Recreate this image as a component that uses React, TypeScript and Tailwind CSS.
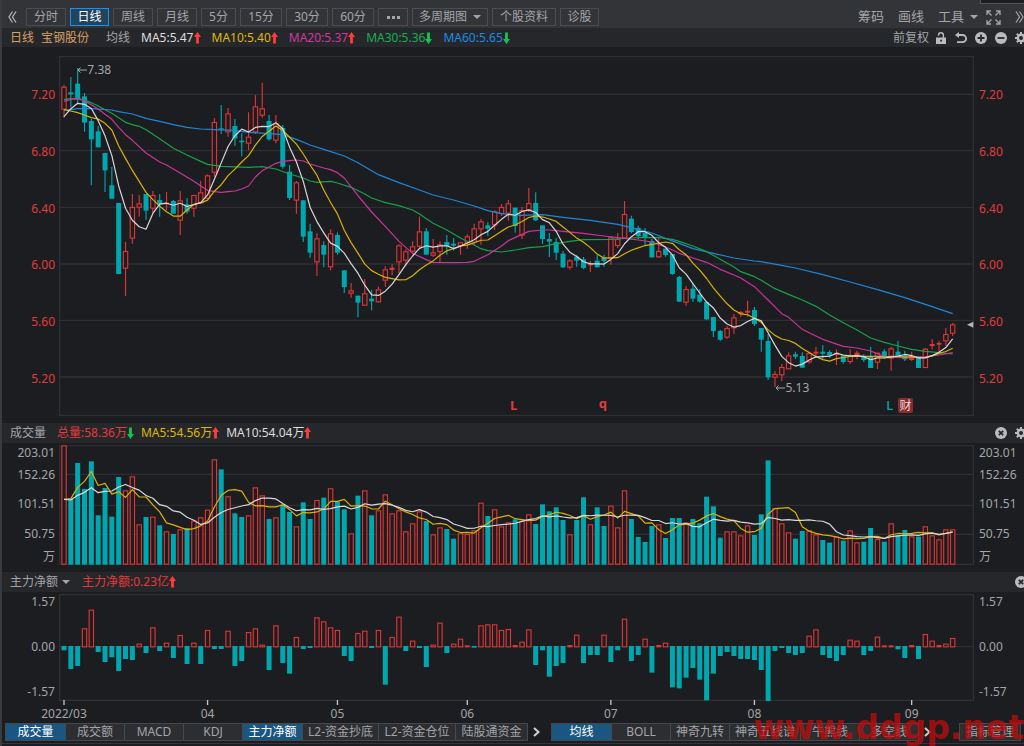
import type { ReactNode } from "react";

// All plots share one unit system: 3 units per CSS pixel, 20.508 units per trading day.
const PLOT_W = 2745;
const x = (i: number) => 15 + i * 20.508;

const UP = "#dc3636";
const DOWN = "#00a7af";
const GRID = "#2e2f32";

// [rising, high, body top, body bottom, low]
const CANDLES: number[][] = [
  [1, 74, 80, 149, 173], [0, 51, 97, 103, 142], [0, 24, 71, 119, 130], [0, 99, 109, 188, 215], [0, 177, 183, 238, 376],
  [0, 198, 214, 262, 262], [0, 279, 279, 331, 396], [0, 321, 376, 416, 416], [0, 429, 429, 642, 643], [1, 546, 573, 626, 708],
  [1, 402, 441, 536, 551], [1, 405, 430, 443, 470], [0, 402, 402, 452, 479], [1, 393, 405, 446, 459], [0, 402, 420, 433, 470],
  [1, 396, 428, 433, 450], [0, 420, 423, 461, 461], [1, 393, 421, 482, 525], [0, 414, 433, 455, 461], [1, 405, 405, 446, 470],
  [1, 363, 397, 430, 430], [1, 343, 346, 416, 420], [1, 174, 186, 338, 350], [0, 135, 205, 209, 222], [1, 144, 160, 217, 230],
  [0, 177, 198, 235, 258], [0, 220, 242, 247, 289], [1, 157, 230, 251, 270], [1, 106, 139, 217, 222], [1, 68, 145, 167, 173],
  [0, 165, 183, 238, 242], [1, 165, 190, 242, 250], [0, 195, 204, 320, 326], [0, 315, 335, 414, 420], [1, 363, 367, 422, 461],
  [0, 421, 421, 530, 546], [0, 491, 514, 578, 593], [1, 520, 535, 607, 648], [0, 544, 555, 584, 622], [1, 508, 520, 622, 631],
  [0, 517, 525, 578, 584], [0, 631, 631, 681, 699], [1, 669, 691, 701, 713], [0, 707, 707, 728, 772], [1, 657, 700, 737, 737],
  [0, 690, 716, 724, 751], [1, 680, 688, 727, 728], [1, 619, 628, 662, 680], [1, 613, 623, 630, 646], [1, 553, 556, 607, 640],
  [1, 568, 574, 602, 619], [1, 544, 559, 575, 578], [1, 470, 514, 560, 568], [0, 504, 514, 584, 584], [1, 537, 577, 587, 591],
  [1, 544, 553, 576, 610], [0, 525, 546, 558, 584], [0, 534, 551, 557, 572], [1, 547, 547, 558, 584], [1, 523, 529, 550, 566],
  [1, 491, 505, 548, 555], [1, 477, 484, 508, 554], [0, 487, 496, 506, 528], [1, 451, 454, 496, 510], [1, 432, 441, 462, 468],
  [1, 420, 430, 461, 482], [0, 443, 443, 498, 518], [1, 441, 450, 527, 537], [1, 384, 429, 452, 456], [0, 397, 429, 481, 483],
  [0, 496, 496, 537, 552], [0, 519, 537, 545, 591], [0, 534, 546, 578, 600], [0, 573, 581, 622, 623], [1, 598, 601, 623, 629],
  [0, 585, 590, 602, 620], [0, 591, 598, 624, 628], [1, 603, 610, 616, 636], [0, 584, 602, 622, 622], [0, 584, 592, 603, 620],
  [1, 528, 532, 596, 614], [1, 519, 537, 558, 564], [1, 423, 462, 535, 536], [0, 467, 476, 516, 520], [0, 498, 504, 528, 537],
  [0, 504, 519, 532, 556], [0, 537, 543, 592, 593], [1, 534, 573, 592, 594], [0, 561, 566, 585, 590], [0, 582, 582, 642, 644],
  [0, 648, 651, 725, 726], [1, 678, 687, 728, 737], [0, 672, 686, 716, 726], [0, 687, 704, 725, 728], [0, 726, 726, 778, 780],
  [0, 771, 771, 813, 831], [0, 810, 813, 839, 843], [1, 798, 804, 833, 837], [1, 762, 772, 805, 822], [1, 753, 756, 763, 771],
  [1, 722, 752, 758, 770], [0, 741, 750, 792, 798], [0, 804, 804, 839, 875], [0, 822, 843, 952, 960], [1, 933, 942, 953, 981],
  [1, 912, 921, 946, 963], [1, 877, 886, 928, 928], [0, 875, 883, 890, 897], [0, 877, 888, 923, 923], [1, 875, 879, 907, 911],
  [1, 860, 875, 881, 888], [0, 856, 875, 881, 896], [0, 871, 876, 885, 894], [1, 868, 878, 885, 915], [0, 885, 885, 906, 911],
  [1, 868, 888, 906, 912], [1, 873, 878, 885, 898], [0, 883, 888, 900, 906], [0, 860, 888, 924, 924], [1, 878, 878, 908, 927],
  [0, 868, 874, 890, 896], [1, 860, 865, 896, 932], [0, 842, 875, 886, 890], [0, 873, 886, 898, 903], [1, 875, 894, 900, 903],
  [0, 889, 889, 924, 924], [1, 864, 866, 924, 924], [1, 837, 852, 858, 868], [1, 842, 849, 854, 876], [1, 804, 822, 844, 858],
  [1, 789, 793, 821, 828],
];

// Top edge of every volume bar, colours follow the candles.
const VOLUME_BASE = 434;
const VOLUME = [
  76, 236, 129, 207, 124, 286, 204, 290, 171, 211, 169, 313, 291, 290, 316, 334, 342, 328, 324, 302,
  292, 269, 118, 148, 229, 280, 291, 286, 202, 226, 297, 292, 254, 276, 319, 247, 297, 240, 233, 205,
  245, 268, 340, 227, 211, 286, 271, 223, 280, 271, 334, 310, 274, 303, 343, 322, 327, 356, 340, 342,
  331, 248, 288, 268, 319, 307, 298, 302, 283, 312, 253, 274, 262, 300, 343, 300, 232, 313, 262, 318,
  257, 322, 211, 297, 351, 366, 318, 313, 354, 294, 294, 307, 297, 310, 230, 259, 353, 334, 334, 346,
  316, 345, 283, 121, 264, 310, 337, 356, 333, 331, 343, 360, 368, 350, 362, 331, 367, 365, 324, 357,
  365, 310, 346, 330, 349, 350, 319, 346, 358, 328, 328,
];

const NET_ZERO = 230;
const NET = [
  241, 297, 288, 177, 121, 246, 276, 262, 303, 267, 270, 223, 249, 174, 243, 220, 264, 197, 282, 220,
  282, 182, 237, 237, 184, 288, 273, 188, 177, 226, 300, 168, 279, 311, 203, 237, 234, 144, 156, 174,
  182, 258, 273, 191, 184, 234, 182, 344, 203, 142, 243, 214, 234, 291, 226, 160, 249, 223, 208, 228,
  233, 168, 165, 165, 182, 179, 227, 217, 180, 285, 241, 320, 288, 279, 227, 196, 279, 255, 255, 196,
  276, 241, 148, 273, 255, 208, 308, 227, 220, 352, 355, 323, 294, 329, 391, 311, 258, 246, 258, 267,
  267, 270, 300, 393, 243, 234, 249, 255, 249, 199, 180, 255, 264, 273, 255, 211, 214, 255, 243, 202,
  228, 228, 238, 264, 227, 267, 194, 214, 227, 223, 206,
];

type Point = [number, number];

const MA20: Point[] = [
  [0, 124], [1, 118], [2, 116], [3, 122], [4, 134], [5, 147], [6, 163], [7, 178], [8, 202], [9, 224], [10, 241], [12, 279],
  [14, 306], [15, 315], [17, 339], [19, 364], [20, 378], [21, 391], [22, 395], [23, 397], [24, 395], [25, 393], [26, 387],
  [27, 378], [28, 351], [29, 332], [30, 321], [31, 310], [32, 304], [33, 302], [34, 300], [35, 303], [36, 312], [38, 324],
  [39, 329], [40, 338], [41, 354], [43, 407], [45, 456], [47, 499], [49, 544], [51, 580], [53, 599], [54, 607], [57, 608],
  [59, 607], [60, 604], [62, 584], [64, 558], [65, 542], [67, 523], [68, 514], [70, 510], [71, 510], [73, 514], [76, 520],
  [79, 528], [82, 535], [84, 540], [86, 546], [88, 561], [89, 570], [90, 580], [92, 594], [94, 607], [96, 628], [98, 645],
  [99, 654], [101, 680], [103, 720], [105, 761], [106, 772], [108, 808], [109, 818], [111, 838], [114, 859], [116, 864],
  [118, 873], [120, 890], [123, 894], [126, 890], [128, 885], [130, 878],
];

const MA30: Point[] = [
  [0, 118], [1, 116], [2, 115], [3, 121], [4, 128], [5, 138], [6, 149], [7, 160], [9, 187], [10, 194], [11, 199], [12, 209],
  [14, 236], [16, 265], [18, 285], [20, 304], [21, 313], [23, 319], [27, 322], [29, 320], [31, 327], [33, 342], [35, 354],
  [36, 363], [37, 367], [39, 364], [40, 369], [42, 382], [44, 402], [45, 414], [47, 428], [49, 437], [51, 450], [52, 462],
  [54, 490], [56, 510], [58, 534], [60, 555], [61, 566], [62, 572], [64, 576], [66, 570], [68, 563], [70, 560], [72, 551],
  [74, 544], [76, 539], [80, 538], [83, 534], [85, 532], [87, 533], [89, 538], [90, 544], [92, 558], [94, 575], [96, 598],
  [98, 621], [99, 635], [101, 650], [102, 661], [104, 686], [106, 703], [108, 720], [110, 739], [112, 765], [114, 788],
  [116, 810], [118, 834], [120, 847], [122, 858], [124, 868], [126, 874], [128, 878], [130, 882],
];

const MA60: Point[] = [
  [0, 151], [1, 149], [2, 146], [4, 146], [7, 150], [8, 155], [10, 162], [12, 175], [14, 184], [16, 194], [18, 202],
  [20, 207], [22, 209], [25, 211], [27, 217], [30, 221], [32, 224], [34, 238], [36, 255], [38, 268], [41, 288], [43, 308],
  [46, 344], [49, 368], [52, 390], [54, 405], [57, 420], [60, 438], [62, 452], [64, 461], [67, 466], [70, 464], [73, 472],
  [77, 481], [81, 493], [84, 508], [86, 519], [88, 535], [90, 550], [92, 566], [95, 580], [98, 594], [101, 603], [102, 605],
  [105, 616], [107, 624], [111, 644], [115, 666], [119, 689], [123, 713], [127, 740], [130, 761],
];

// `head` carries the days that have no full window inside the visible range.
function average(values: number[], span: number, head: number[]): Point[] {
  return values.map((_, i) => {
    if (i < span - 1) return [i, head[i]];
    const window = values.slice(i - span + 1, i + 1);
    return [i, window.reduce((a, b) => a + b, 0) / span];
  });
}

const CLOSES = CANDLES.map(([rising, , top, bottom]) => (rising ? top : bottom));
const MA5 = average(CLOSES, 5, [170, 146, 130, 133]);
const MA10 = average(CLOSES, 10, [149, 153, 158, 165, 173, 177, 190, 210, 258]);
const VOL5 = average(VOLUME, 5, [238, 236, 202, 184]);
const VOL10 = average(VOLUME, 10, [238, 240, 226, 217, 203, 218, 214, 213, 201]);

function Line({ points, color }: { points: Point[]; color: string }) {
  return (
    <polyline
      points={points.map(([i, y]) => `${x(i).toFixed(1)},${y.toFixed(1)}`).join(" ")}
      fill="none"
      stroke={color}
      strokeWidth={3.6}
      strokeLinejoin="round"
    />
  );
}

function Bar({ i, top, bottom, rising }: { i: number; top: number; bottom: number; rising: boolean }) {
  if (rising && bottom - top > 7) {
    return <rect x={x(i) - 6.5} y={top + 1.5} width={13} height={bottom - top - 3} fill="#1c1d20" stroke={UP} strokeWidth={3.4} />;
  }
  return <rect x={x(i) - 7.5} y={top} width={15} height={Math.max(bottom - top, 3)} fill={rising ? UP : DOWN} />;
}

function Frame({ top, bottom, lines }: { top: number; bottom: number; lines: number[] }) {
  return (
    <g stroke={GRID} strokeWidth={4} fill="none">
      <rect x={2} y={top + 2} width={PLOT_W - 4} height={bottom - top - 4} />
      {lines.map((y) => (
        <line key={y} x1={0} x2={PLOT_W} y1={y} y2={y} />
      ))}
    </g>
  );
}

function PricePlot() {
  return (
    <svg viewBox={`0 -12 ${PLOT_W} 1080`} preserveAspectRatio="none" className="block h-[360px] w-full">
      <Frame top={-12} bottom={1068} lines={[103, 272, 442, 612, 781, 951]} />
      {CANDLES.map(([rising, high, top, bottom, low], i) => (
        <g key={i}>
          <line x1={x(i)} x2={x(i)} y1={high} y2={low} stroke={rising ? UP : DOWN} strokeWidth={3.4} />
          <Bar i={i} top={top} bottom={bottom} rising={rising === 1} />
        </g>
      ))}
      <Line points={MA60} color="#1f86d8" />
      <Line points={MA30} color="#18a04a" />
      <Line points={MA20} color="#c9359b" />
      <Line points={MA10} color="#d9b107" />
      <Line points={MA5} color="#d8d8da" />
      <polygon points="2724,794 2743,785 2743,803" fill="#b4b6b9" />
    </svg>
  );
}

function VolumePlot() {
  return (
    <svg viewBox={`0 75 ${PLOT_W} 360`} preserveAspectRatio="none" className="block h-[120px] w-full">
      <Frame top={75} bottom={435} lines={[163, 256, 343]} />
      {VOLUME.map((top, i) => (
        <Bar key={i} i={i} top={top} bottom={VOLUME_BASE} rising={CANDLES[i][0] === 1} />
      ))}
      <Line points={VOL5} color="#d9b107" />
      <Line points={VOL10} color="#d8d8da" />
    </svg>
  );
}

const MONTHS = [
  { day: 0, label: "2022/03" },
  { day: 21, label: "04" },
  { day: 40, label: "05" },
  { day: 59, label: "06" },
  { day: 80, label: "07" },
  { day: 101, label: "08" },
  { day: 124, label: "09" },
];

function NetPlot() {
  return (
    <svg viewBox={`0 72 ${PLOT_W} 336`} preserveAspectRatio="none" className="block h-[112px] w-full">
      <Frame top={72} bottom={393} lines={[NET_ZERO]} />
      {NET.map((end, i) => (
        <Bar key={i} i={i} top={end < NET_ZERO ? end - 2 : NET_ZERO - 2} bottom={end < NET_ZERO ? NET_ZERO + 2 : end} rising={end < NET_ZERO} />
      ))}
      {MONTHS.map(({ day }) => (
        <line key={day} x1={x(day)} x2={x(day)} y1={390} y2={405} stroke="#c4c5c7" strokeWidth={4} />
      ))}
    </svg>
  );
}

function PlotRow({ left, right, children }: { left: ReactNode; right: ReactNode; children: ReactNode }) {
  return (
    <div className="flex">
      <div className="w-[57px] shrink-0 pr-1 text-right">{left}</div>
      <div className="relative min-w-0 flex-1">{children}</div>
      <div className="w-[50px] shrink-0 pl-[5px]">{right}</div>
    </div>
  );
}

function PriceScale() {
  return (
    <div className="flex h-[360px] flex-col justify-between pt-[29px] pb-[27px] text-[#e23b3b]">
      {["7.20", "6.80", "6.40", "6.00", "5.60", "5.20"].map((price) => (
        <span key={price} className="h-5 leading-5">{price}</span>
      ))}
    </div>
  );
}

function VolumeScale() {
  return (
    <div className="flex flex-col">
      <span className="h-4 leading-4">203.01</span>
      <span className="h-7 leading-7">152.26</span>
      <span className="h-[30px] leading-[30px]">101.51</span>
      <span className="h-[30px] leading-[30px]">50.75</span>
      <span className="h-4 leading-4">万</span>
    </div>
  );
}

function NetScale() {
  return (
    <div className="flex h-[106px] flex-col justify-between leading-4">
      <span>1.57</span>
      <span>0.00</span>
      <span>-1.57</span>
    </div>
  );
}

function Trend({ up }: { up?: boolean }) {
  return (
    <svg viewBox="0 0 7 12" className={up ? "h-3 w-[7px] text-[#ff3b3b]" : "h-3 w-[7px] rotate-180 text-[#12c552]"}>
      <path d="M3.5 0 7 5H4.9V11.5H2.1V5H0Z" fill="currentColor" />
    </svg>
  );
}

function Reading({ text, up, color }: { text: string; up?: boolean; color: string }) {
  return (
    <span className={`flex items-center ${color}`}>
      {text}
      <Trend up={up} />
    </span>
  );
}

function Caret() {
  return (
    <svg viewBox="0 0 8 4" className="h-1 w-2">
      <path d="M0 0H8L4 4Z" fill="currentColor" />
    </svg>
  );
}

function IconButton({ label, children }: { label: string; children: ReactNode }) {
  return (
    <button type="button" aria-label={label} className="flex h-3 w-3 shrink-0 items-center justify-center text-[#b9bbbd]">
      {children}
    </button>
  );
}

function CircleIcon({ d }: { d: string }) {
  return (
    <svg viewBox="0 0 12 12" className="h-3 w-3">
      <circle cx="6" cy="6" r="6" fill="currentColor" />
      <path d={d} stroke="#26272a" strokeWidth="1.8" fill="none" />
    </svg>
  );
}

function GearIcon() {
  return (
    <svg viewBox="0 0 12 12" className="h-3 w-3">
      <circle cx="6" cy="6" r="3.2" fill="none" stroke="currentColor" strokeWidth="2.4" />
      <g stroke="currentColor" strokeWidth="2">
        <path d="M6 0V2.4M6 9.6V12M0 6H2.4M9.6 6H12M1.8 1.8 3.4 3.4M8.6 8.6 10.2 10.2M10.2 1.8 8.6 3.4M3.4 8.6 1.8 10.2" />
      </g>
    </svg>
  );
}

function Chevrons({ flip }: { flip?: boolean }) {
  return (
    <svg viewBox="0 0 9 12" className={flip ? "h-3 w-[9px] rotate-180" : "h-3 w-[9px]"}>
      <path d="M4.5 .5 1 6 4.5 11.5M8 .5 4.5 6 8 11.5" fill="none" stroke="currentColor" strokeWidth="1.2" />
    </svg>
  );
}

const PERIODS = [
  { label: "分时", width: "w-10" },
  { label: "日线", width: "w-[39px]", active: true },
  { label: "周线", width: "w-10" },
  { label: "月线", width: "w-10" },
  { label: "5分", width: "w-[35px]" },
  { label: "15分", width: "w-[42px]" },
  { label: "30分", width: "w-[42px]" },
  { label: "60分", width: "w-[42px]" },
  { label: "•••", width: "w-[30px]", dots: true },
  { label: "多周期图", width: "w-[76px]", menu: true },
  { label: "个股资料", width: "w-16" },
  { label: "诊股", width: "w-[39px]" },
];

function Toolbar() {
  return (
    <header className="relative flex h-7 items-end justify-between overflow-hidden bg-[#333438] pb-0.5 text-[#a3a5a8]">
      <div className="flex items-center gap-1 pl-1.5">
        <button type="button" aria-label="收起" className="mr-[5px] text-[#b9bbbd]">
          <Chevrons />
        </button>
        {PERIODS.map(({ label, width, active, menu, dots }) => (
          <button
            key={label}
            type="button"
            className={`flex h-[18px] items-center justify-center gap-1.5 border leading-4 ${width} ${
              active ? "border-[#1f8fe8] bg-[#21435c] text-white" : "border-[#4b4c50]"
            }`}
          >
            {dots ? (
              <svg viewBox="0 0 13 3" className="h-[3px] w-[13px]" aria-label="更多">
                <path d="M0 0H3V3H0ZM5 0H8V3H5ZM10 0H13V3H10Z" fill="currentColor" />
              </svg>
            ) : (
              label
            )}
            {menu && <Caret />}
          </button>
        ))}
      </div>
      <div className="flex h-[18px] items-center text-[13px]">
        <button type="button" className="mr-3.5">筹码</button>
        <button type="button" className="mr-3.5">画线</button>
        <button type="button" className="mr-2 flex items-center gap-1.5">
          工具
          <Caret />
        </button>
        <button type="button" aria-label="全屏" className="mr-3.5">
          <svg viewBox="0 0 15 15" className="h-[15px] w-[15px]" fill="none" stroke="currentColor" strokeWidth="1.3">
            <path d="M1 5V1H5M1 1 5.5 5.5M10 1H14V5M14 1 9.5 5.5M1 10V14H5M1 14 5.5 9.5M10 14H14V10M14 14 9.5 9.5" />
          </svg>
        </button>
        <button type="button" aria-label="展开">
          <Chevrons flip />
        </button>
      </div>
      <div className="absolute top-0 right-0 h-1 w-11 border-b border-l border-[#55565a] bg-[#1c1d20]" />
    </header>
  );
}

function PriceHeader() {
  return (
    <div className="flex h-[19px] items-center justify-between overflow-hidden bg-[#26272a]">
      <div className="flex items-center gap-[11px] pl-2 whitespace-nowrap">
        <span className="-mr-1 text-[#d9a066]">日线</span>
        <span className="mr-1.5 text-[#d9a066]">宝钢股份</span>
        <span>均线</span>
        <Reading text="MA5:5.47" up color="text-[#dededf]" />
        <Reading text="MA10:5.40" up color="text-[#dfb70a]" />
        <Reading text="MA20:5.37" up color="text-[#cc3aa0]" />
        <Reading text="MA30:5.36" color="text-[#17ae50]" />
        <Reading text="MA60:5.65" color="text-[#1f8ae0]" />
      </div>
      <div className="-mr-[3px] flex items-center gap-2">
        <button type="button" className="-mr-0.5">前复权</button>
        <IconButton label="锁定">
          <svg viewBox="0 0 12 12" className="h-3 w-3">
            <path d="M3.5 3.8V3.2A2.4 2.4 0 0 1 8.4 3.2V6" fill="none" stroke="currentColor" strokeWidth="1.4" />
            <path d="M1 5.4H11V12H1ZM5.2 7.7V9.5H7V7.7Z" fill="currentColor" fillRule="evenodd" />
          </svg>
        </IconButton>
        <IconButton label="撤销">
          <svg viewBox="0 0 12 12" className="h-3 w-3">
            <path d="M2 3H7.5A3.5 3.5 0 0 1 7.5 10.2H2" fill="none" stroke="currentColor" strokeWidth="1.8" />
            <path d="M0 3 4 0V6Z" fill="currentColor" />
          </svg>
        </IconButton>
        <IconButton label="放大">
          <CircleIcon d="M6 2.5V9.5M2.5 6H9.5" />
        </IconButton>
        <IconButton label="缩小">
          <CircleIcon d="M2.5 6H9.5" />
        </IconButton>
        <IconButton label="设置">
          <GearIcon />
        </IconButton>
      </div>
    </div>
  );
}

// Event marks and extreme prices that sit on top of the candles.
function PriceMarks() {
  return (
    <div className="leading-4">
      <span className="absolute top-[6px] left-[2%] flex items-center">
        <LeftArrow />
        7.38
      </span>
      <span className="absolute top-[324px] left-[78.3%] flex items-center">
        <LeftArrow />
        5.13
      </span>
      <span className="absolute top-[341px] left-[49.3%] text-[13px] font-bold text-[#e23b3b]">L</span>
      <span className="absolute top-[339px] left-[59%] text-[13px] font-bold text-[#e23b3b]">q</span>
      <span className="absolute top-[341px] left-[90.4%] text-[13px] font-medium text-[#00a7af]">L</span>
      <span className="absolute top-[342px] left-[91.7%] h-[15px] w-[15px] rounded-xs bg-[#8b2a2d] text-center leading-[15px] text-[#ead9d9]">
        财
      </span>
    </div>
  );
}

function LeftArrow() {
  return (
    <svg viewBox="0 0 10 6" className="h-1.5 w-2.5">
      <path d="M10 3H1M3.5 .5 1 3 3.5 5.5" fill="none" stroke="currentColor" strokeWidth="1" />
    </svg>
  );
}

function Tab({ label, width, active }: { label: string; width: string; active?: boolean }) {
  return (
    <button
      type="button"
      className={`-ml-px h-[18px] shrink-0 border border-[#47484c] leading-4 whitespace-nowrap ${width} ${
        active ? "bg-[#1a5682] text-white" : "bg-[#2d2e32]"
      }`}
    >
      {label}
    </button>
  );
}

function NextTabs() {
  return (
    <button type="button" aria-label="下一组" className="flex w-6 shrink-0 items-center justify-center pr-2 text-[#d0d1d3]">
      <svg viewBox="0 0 7 10" className="h-2.5 w-[7px]">
        <path d="M1 1 5.5 5 1 9" fill="none" stroke="currentColor" strokeWidth="2" />
      </svg>
    </button>
  );
}

function IndicatorTabs() {
  return (
    <nav className="flex overflow-hidden pr-[3px] pl-1">
      <Tab label="成交量" width="w-[61px]" active />
      <Tab label="成交额" width="w-[60px]" />
      <Tab label="MACD" width="w-[60px]" />
      <Tab label="KDJ" width="w-[60px]" />
      <Tab label="主力净额" width="w-[61px]" active />
      <Tab label="L2-资金抄底" width="w-[77px]" />
      <Tab label="L2-资金仓位" width="w-[78px]" />
      <Tab label="陆股通资金" width="w-[73px]" />
      <NextTabs />
      <Tab label="均线" width="w-[61px]" active />
      <Tab label="BOLL" width="w-[60px]" />
      <Tab label="神奇九转" width="w-[60px]" />
      <Tab label="神奇五线谱" width="w-[72px]" />
      <Tab label="牛熊线" width="w-[60px]" />
      <Tab label="多空线" width="w-[60px]" />
      <NextTabs />
      <button type="button" className="ml-auto h-[18px] w-[62px] shrink-0 border border-[#47484c] bg-[#2d2e32] leading-4">
        指标管理
      </button>
    </nav>
  );
}

export default function App() {
  return (
    <main className="relative overflow-hidden border-l-2 border-[#3a3b3f] bg-[#1c1d20] pb-1 font-['Noto_Sans','Noto_Sans_CJK_SC',sans-serif] text-xs text-[#a3a5a8]">
      <Toolbar />
      <PriceHeader />

      <section className="pt-[9px] pb-[7px]">
        <PlotRow left={<PriceScale />} right={<PriceScale />}>
          <PricePlot />
          <PriceMarks />
        </PlotRow>
      </section>

      <section className="pb-[7px]">
        <div className="flex h-5 items-center justify-between overflow-hidden bg-[#26272a] pl-2">
          <div className="flex items-center gap-[7px]">
            <h2 className="mr-1">成交量</h2>
            <Reading text="总量:58.36万" color="text-[#e23b3b]" />
            <Reading text="MA5:54.56万" up color="text-[#dfb70a]" />
            <Reading text="MA10:54.04万" up color="text-[#dededf]" />
          </div>
          <div className="-mr-[3px] flex gap-2">
            <IconButton label="关闭成交量">
              <CircleIcon d="M3.8 3.8 8.2 8.2M8.2 3.8 3.8 8.2" />
            </IconButton>
            <IconButton label="设置成交量">
              <GearIcon />
            </IconButton>
          </div>
        </div>
        <div className="pt-0.5">
          <PlotRow left={<VolumeScale />} right={<VolumeScale />}>
            <VolumePlot />
          </PlotRow>
        </div>
      </section>

      <section>
        <div className="flex h-5 items-center justify-between overflow-hidden bg-[#26272a] pl-2">
          <div className="flex items-center gap-3">
            <button type="button" className="flex items-center gap-1">
              主力净额
              <Caret />
            </button>
            <Reading text="主力净额:0.23亿" up color="text-[#e23b3b]" />
          </div>
          <div className="-mr-[3px] flex">
            <IconButton label="关闭主力净额">
              <CircleIcon d="M3.8 3.8 8.2 8.2M8.2 3.8 3.8 8.2" />
            </IconButton>
          </div>
        </div>
        <div className="pt-0.5">
          <PlotRow left={<NetScale />} right={<NetScale />}>
            <NetPlot />
            <div className="relative h-[17px] leading-4">
              {MONTHS.map(({ day, label }) => (
                <span key={day} className="absolute -translate-x-1/2" style={{ left: `${(x(day) / PLOT_W) * 100}%` }}>
                  {label}
                </span>
              ))}
            </div>
          </PlotRow>
        </div>
      </section>

      <IndicatorTabs />
      <div className="mt-0.5 border-b border-[#34353a]" />

      <div className="pointer-events-none absolute right-0 bottom-1 font-['DejaVu_Sans',sans-serif] text-[33px] leading-none font-bold text-[#c00c0c]/75">
        www.ddgp.net
      </div>
    </main>
  );
}
